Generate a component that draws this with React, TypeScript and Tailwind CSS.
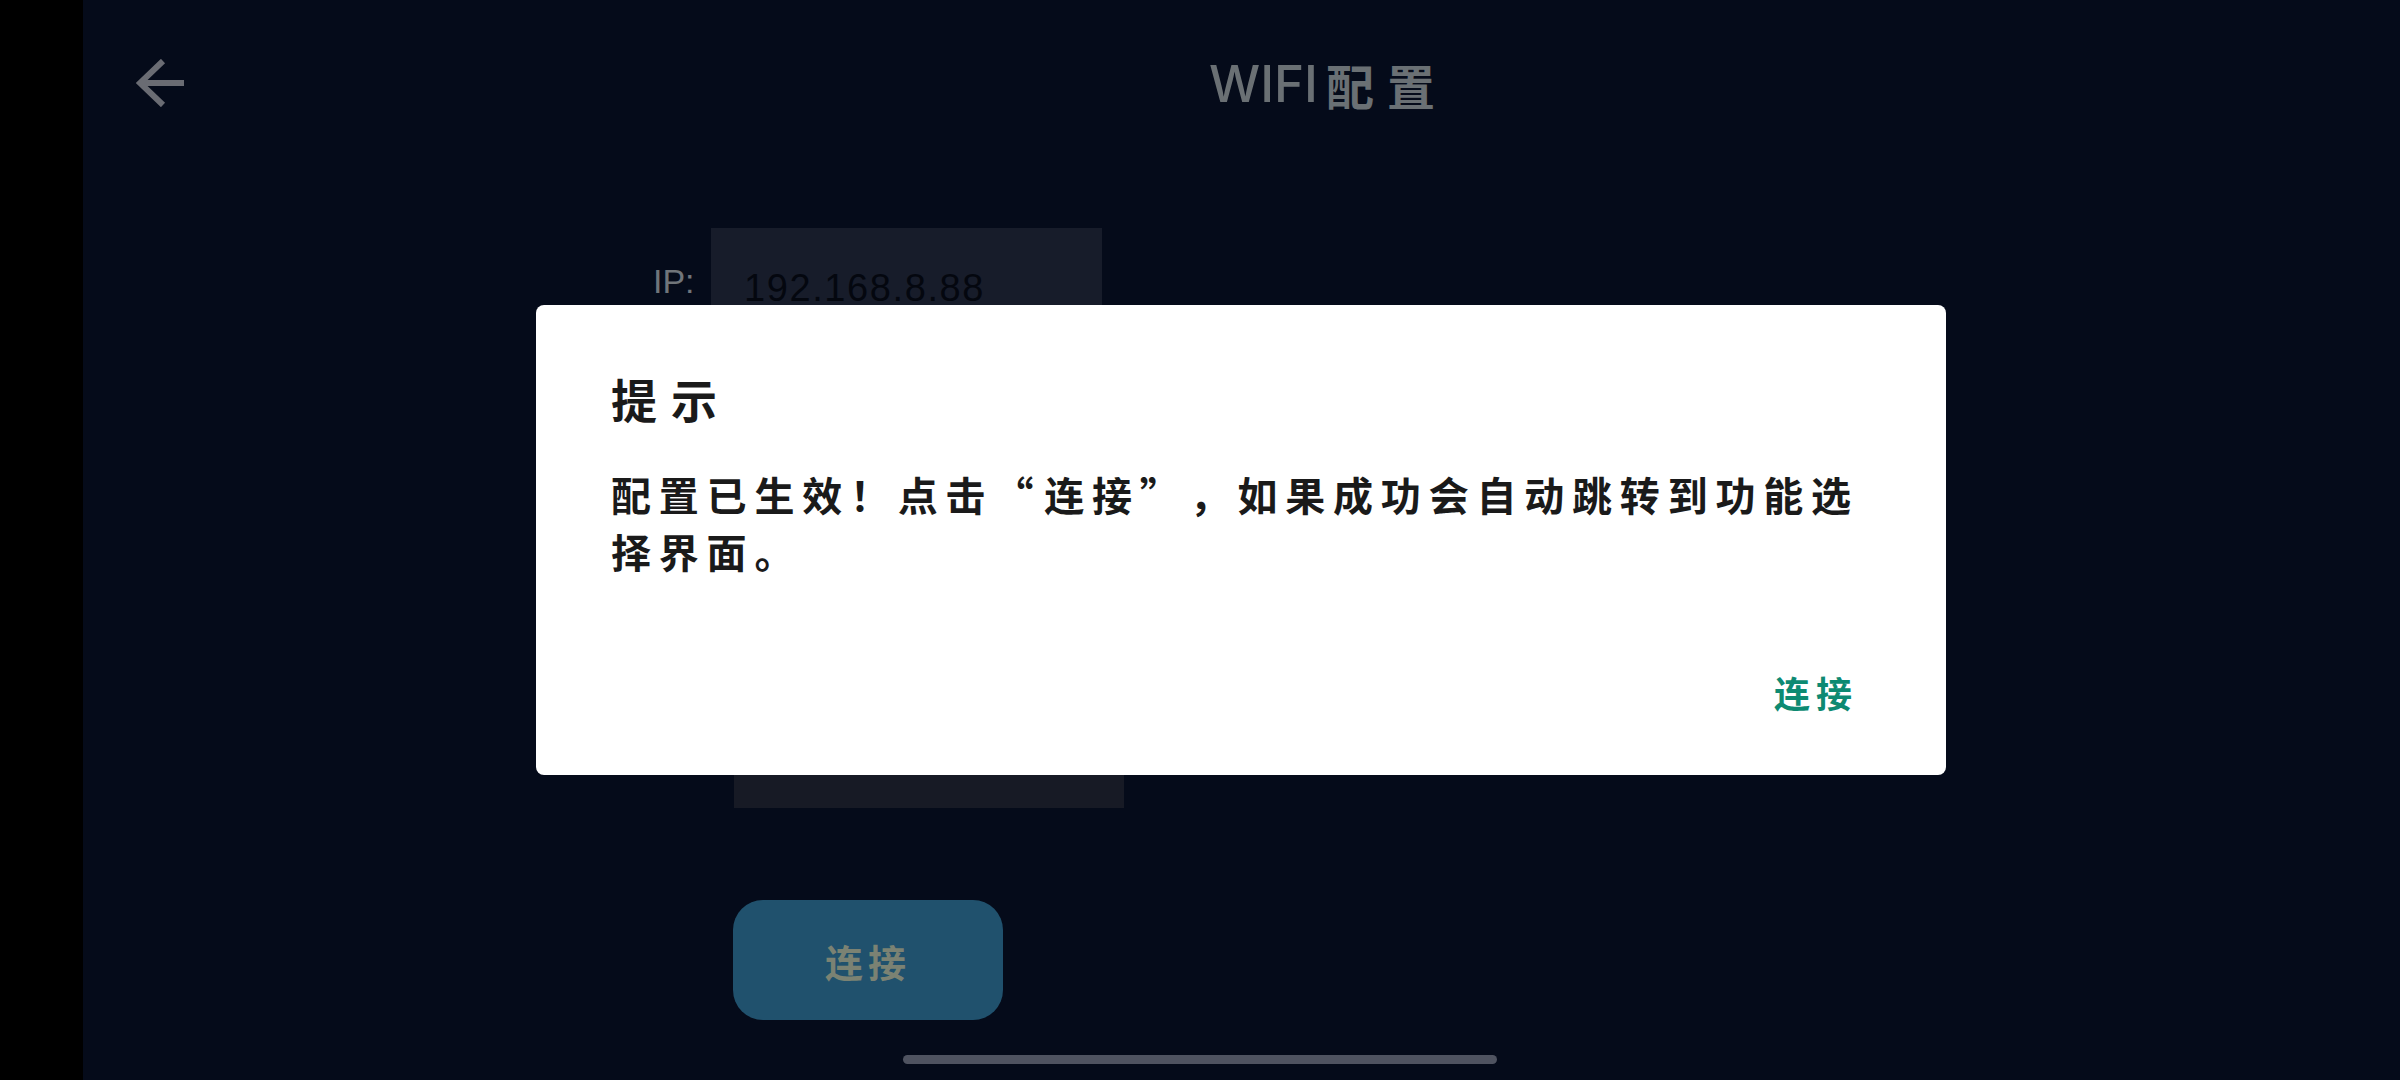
const cjk = "font-['Noto_Sans_CJK_SC',sans-serif]";

export default function App() {
  return (
    <div lang="zh-CN" className="flex h-[1080px] w-[2400px] overflow-hidden bg-black relative">
      <div className="w-[83px] shrink-0 bg-black" />

      <main className="flex-1 flex flex-col bg-[#050b1a]">
        <header className="h-[228px] flex items-start pt-[59px] pl-[53px]">
          <svg viewBox="0 0 48 48" className="w-[48px] h-[48px] text-[#6a6c73]" fill="none" stroke="currentColor" strokeWidth="6">
            <path d="M6 24H48" />
            <path d="M27 2L4 24L27 46" />
          </svg>
          <h1 className="ml-[1025px] -mt-[5px] flex items-center text-[#6a7074] leading-[60px]">
            <span className="font-['Inter',sans-serif] font-medium text-[51px]">WIFI</span>
            <span className={`${cjk} text-[48px] tracking-[13px] ml-[8px] font-bold`}>配置</span>
          </h1>
        </header>

        <div className="flex items-center h-[120px] pl-[570px]">
          <span className="w-[58px] mb-[14px] font-['Liberation_Sans',sans-serif] text-[34px] text-[#70757a]">IP:</span>
          <div className="w-[391px] h-full flex items-center pl-[33px] bg-[#171c2a] font-['Liberation_Sans',sans-serif] text-[38px] tracking-[1.6px] text-[#04070f]">
            192.168.8.88
          </div>
        </div>

        <div className="ml-[651px] mt-[340px] w-[390px] h-[120px] bg-[#171a25]" />

        <button className={`${cjk} ml-[650px] mt-[92px] w-[270px] h-[120px] rounded-[30px] bg-[#20516d] text-[#7b8273] text-[38px] tracking-[5px] font-bold`}>
          连接
        </button>

        <div className="ml-[820px] mt-[35px] w-[594px] h-[9px] rounded-full bg-[#4f5360]" />
      </main>

      <div className="absolute top-[305px] left-[536px] w-[1410px] h-[470px] flex flex-col bg-white rounded-[8px] pl-[75px] pr-[75px] pt-[63px] pb-[58px]">
        <h2 className={`${cjk} text-[46px] leading-[60px] tracking-[14px] font-bold text-[#1a1a1a]`}>提示</h2>
        <div className={`${cjk} mt-[38px] text-[40px] leading-[57px] tracking-[7.8px] font-bold text-[#1a1a1a]`}>
          <p className="whitespace-nowrap">
            {"配置已生效\uFF01点击"}
            <span className="mr-[3px]">{"\u201C"}</span>
            连接
            <span className="mr-[22px]">{"\u201D"}</span>
            {"\uFF0C如果成功会自动跳转到功能选"}
          </p>
          <p>{"择界面\u3002"}</p>
        </div>
        <div className="mt-auto flex justify-end pr-[13px]">
          <button className={`${cjk} text-[36px] leading-[50px] tracking-[6px] font-bold text-[#0d8a72]`}>连接</button>
        </div>
      </div>
    </div>
  );
}
